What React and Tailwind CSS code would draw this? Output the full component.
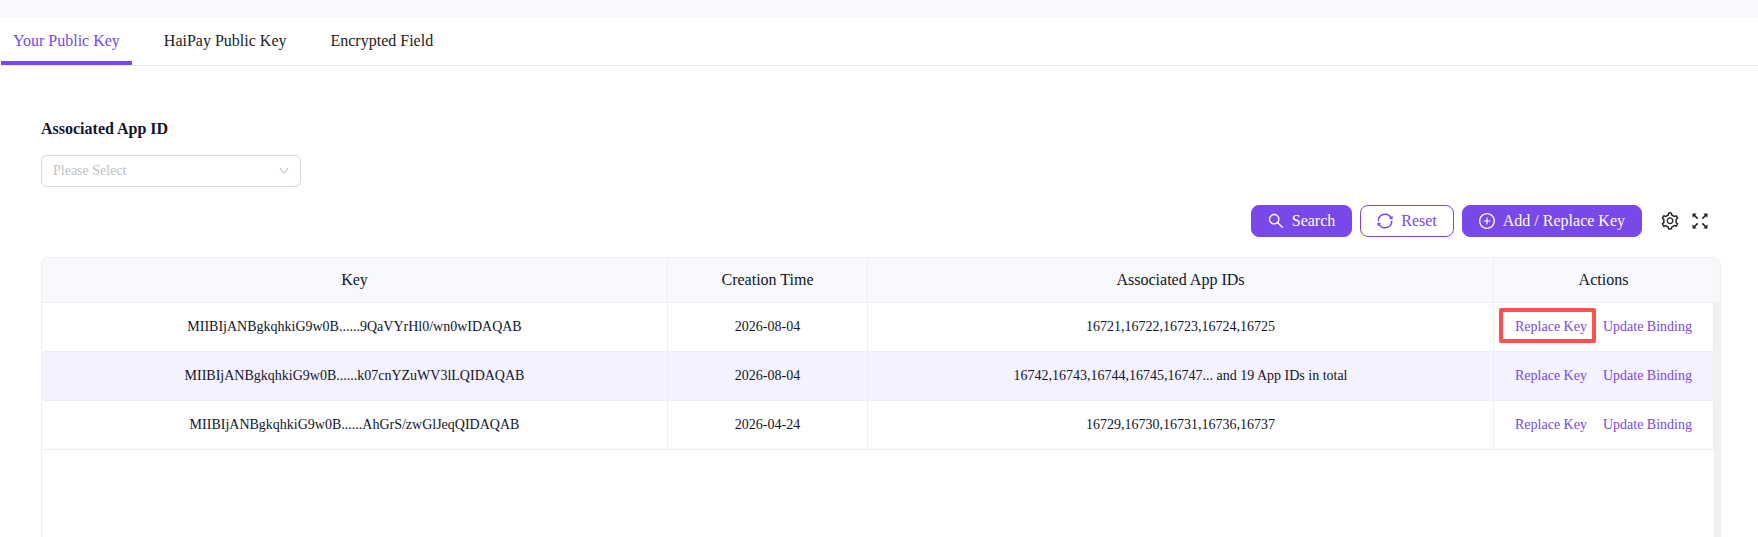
import React, { useState } from "react";
import {
  AiOutlineDown,
  AiOutlinePlusCircle,
  AiOutlineSearch,
  AiOutlineSetting,
} from "react-icons/ai";

const tabs = ["Your Public Key", "HaiPay Public Key", "Encrypted Field"];

const rows = [
  {
    key: "MIIBIjANBgkqhkiG9w0B......9QaVYrHl0/wn0wIDAQAB",
    created: "2026-08-04",
    apps: "16721,16722,16723,16724,16725",
    marked: true,
  },
  {
    key: "MIIBIjANBgkqhkiG9w0B......k07cnYZuWV3lLQIDAQAB",
    created: "2026-08-04",
    apps: "16742,16743,16744,16745,16747... and 19 App IDs in total",
    active: true,
  },
  {
    key: "MIIBIjANBgkqhkiG9w0B......AhGrS/zwGlJeqQIDAQAB",
    created: "2026-04-24",
    apps: "16729,16730,16731,16736,16737",
  },
];

const ResetIcon = () => (
  <svg viewBox="0 0 16 16" className="w-4 h-4" fill="none" stroke="currentColor" strokeWidth="1.4">
    <path d="M1.300 8.200A6.700 6.700 0 0 1 14 5M14.700 7.800A6.700 6.700 0 0 1 2 11" />
    <path fill="currentColor" stroke="none" d="M15.600 2.800v3.800l-3.800-1zM.4 13.200V9.400l3.800 1z" />
  </svg>
);

const ExpandIcon = () => (
  <svg viewBox="0 0 16 16" className="w-4 h-4" fill="none" stroke="currentColor" strokeWidth="1.6">
    <path d="M5.600 5.600 1.500 1.500M10.400 5.600l4.100-4.100M5.600 10.400l-4.100 4.100M10.400 10.400l4.100 4.100" />
    <path fill="currentColor" stroke="none" d="M.5.5h4.200L.5 4.700zM15.500.5v4.200L11.300.5zM.5 15.500v-4.200l4.200 4.200zM15.500 15.500h-4.200l4.200-4.200z" />
  </svg>
);

const App = () => {
  const [tab, setTab] = useState(tabs[0]);

  return (
    <div className="h-screen flex flex-col overflow-hidden bg-white text-[#11142d] font-['Liberation_Serif',serif]">
      {/* TOP STRIP */}
      <div className="h-[17px] shrink-0 bg-[#f8f9fd]" />

      {/* TABS */}
      <nav className="flex gap-5 px-px h-[49px] shrink-0 border-b border-[#ebebeb]">
        {tabs.map((name) => (
          <button
            key={name}
            onClick={() => setTab(name)}
            className={`px-3 pt-1 border-b-4 text-base leading-6 ${
              tab === name
                ? "border-[#7848e8] text-[#7848e8]"
                : "border-transparent text-[#222222]"
            }`}
          >
            {name}
          </button>
        ))}
      </nav>

      <main className="flex-1 min-h-0 flex flex-col pl-[41px] pr-[37px] pt-[51px]">
        {/* FILTER */}
        <label htmlFor="app-id" className="text-base leading-6 font-bold">
          Associated App ID
        </label>
        <div className="relative mt-[14px] w-[260px]">
          <select
            id="app-id"
            defaultValue=""
            className="appearance-none block w-full h-8 px-[11px] rounded-md border border-[#d9d9d9] bg-white text-sm text-[#bfbfbf]"
          >
            <option value="">Please Select</option>
          </select>
          <AiOutlineDown className="absolute right-[11px] top-[10px] w-3 h-3 text-[#bfbfbf] pointer-events-none" />
        </div>

        {/* TOOLBAR */}
        <div className="mt-[18px] pr-[13px] flex items-center justify-end gap-2 text-base">
          <button className="h-8 px-4 flex items-center gap-2 rounded-lg border border-[#7848e8] bg-[#7848e8] text-white">
            <AiOutlineSearch viewBox="64 64 896 896" className="w-4 h-4" />
            Search
          </button>
          <button className="h-8 px-4 flex items-center gap-2 rounded-lg border border-[#7848e8] bg-white text-[#7848e8]">
            <ResetIcon />
            Reset
          </button>
          <button className="h-8 px-4 flex items-center gap-2 rounded-lg border border-[#7848e8] bg-[#7848e8] text-white">
            <AiOutlinePlusCircle viewBox="64 64 896 896" className="w-4 h-4" />
            Add / Replace Key
          </button>
          <div className="ml-2.5 flex items-center gap-3 text-[#222222]">
            <button aria-label="Column settings">
              <AiOutlineSetting className="w-5 h-5" />
            </button>
            <button aria-label="Full screen">
              <ExpandIcon />
            </button>
          </div>
        </div>

        {/* KEY TABLE */}
        <div className="mt-5 flex-1 min-h-0 flex flex-col border border-b-0 border-[#eeeeee] rounded-t-lg overflow-hidden">
          <div className="flex-1 bg-[linear-gradient(#f8f9fd_44px,#f1f1f1_44px)]">
            <div className="h-full mr-[6px] bg-white">
              <table className="w-full table-fixed border-separate border-spacing-0 text-center">
                <colgroup>
                  <col />
                  <col className="w-[200px]" />
                  <col />
                  <col className="w-[220px]" />
                </colgroup>
                <thead>
                  <tr className="h-[45px] bg-[#f8f9fd] text-base">
                    {["Key", "Creation Time", "Associated App IDs", "Actions"].map((name) => (
                      <th key={name} className="border-r border-b border-[#eeeeee] font-normal last:border-r-[#f5f6fa]">
                        {name}
                      </th>
                    ))}
                  </tr>
                </thead>
                <tbody className="text-sm">
                  {rows.map((row) => (
                    <tr key={row.key} className={`h-[49px] ${row.active ? "bg-[#f5f2ff]" : ""}`}>
                      <td className="border-r border-b border-[#eeeeee]">{row.key}</td>
                      <td className="border-r border-b border-[#eeeeee]">{row.created}</td>
                      <td className="border-r border-b border-[#eeeeee]">{row.apps}</td>
                      <td className="border-r border-b border-[#eeeeee]">
                        <div className="flex justify-center gap-4 text-[#7848e8]">
                          <a href="#replace" className="relative">
                            Replace Key
                            {row.marked && (
                              <span className="absolute -left-4 -right-[9px] -top-[9px] -bottom-1.5 border-4 border-[#ff5050] rounded-xs" />
                            )}
                          </a>
                          <a href="#binding">Update Binding</a>
                        </div>
                      </td>
                    </tr>
                  ))}
                </tbody>
              </table>
            </div>
          </div>
        </div>
      </main>
    </div>
  );
};

export default App;
